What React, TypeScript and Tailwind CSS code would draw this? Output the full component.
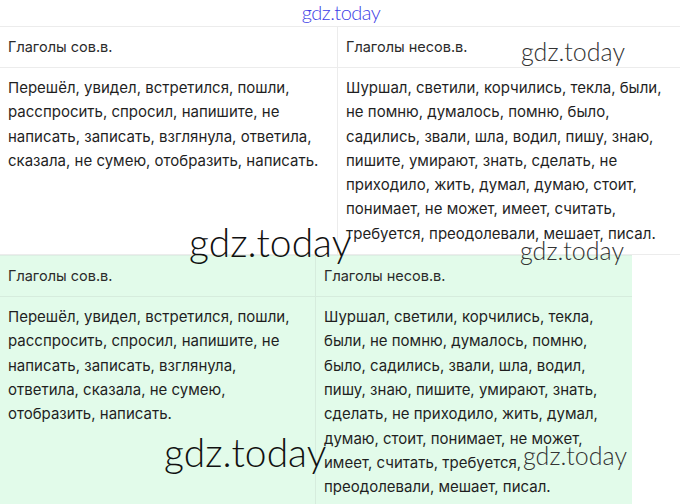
import React from "react";

const sov =
  "Перешёл, увидел, встретился, пошли, расспросить, спросил, напишите, не написать, записать, взглянула, ответила, сказала, не сумею, отобразить, написать.";
const nesov =
  "Шуршал, светили, корчились, текла, были, не помню, думалось, помню, было, садились, звали, шла, водил, пишу, знаю, пишите, умирают, знать, сделать, не приходило, жить, думал, думаю, стоит, понимает, не может, имеет, считать, требуется, преодолевали, мешает, писал.";

function VerbTable({ green }: { green?: boolean }) {
  const wrap = green
    ? "grid w-[632px] grid-cols-[316px_316px] bg-[#e2fbea] border-t border-[#dcefe3]"
    : "grid w-[680px] grid-cols-[338px_342px] bg-white border-t border-[#ececec]";
  const line = green ? "border-[#d6ecdd]" : "border-[#ececec]";
  const head = `px-2 py-2 leading-6 text-[14.5px] text-[#2b2b2b] border-b ${line}`;
  const body = `px-2 py-2 leading-[24.3px] text-[15px] text-[#1f1f1f] border-b ${line}`;

  return (
    <div className={wrap}>
      <div className={`${head} border-r`}>Глаголы сов.в.</div>
      <div className={head}>Глаголы несов.в.</div>
      <div className={`${body} border-r`}>{sov}</div>
      <div className={body}>{nesov}</div>
    </div>
  );
}

export default function App() {
  return (
    <div className="relative w-[680px] h-[504px] overflow-hidden bg-white font-['Inter','Noto_Sans',sans-serif]">
      <div className="h-[26px] flex justify-center">
        <span className="pl-[2px] text-[20px] leading-[24px] text-[#3d3de6] font-['Lato',sans-serif] font-light tracking-tight">
          gdz.today
        </span>
      </div>
      <VerbTable />
      <VerbTable green />

      {/* watermarks over the tables */}
      <span className="absolute left-[521px] top-[39px] text-[25px] leading-none text-[#333] font-light font-['Lato',sans-serif]">
        gdz.today
      </span>
      <span className="absolute left-[189px] top-[223px] text-[39px] leading-none text-[#111] font-light font-['Lato',sans-serif]">
        gdz.today
      </span>
      <span className="absolute left-[520px] top-[238px] text-[25px] leading-none text-[#333] font-light font-['Lato',sans-serif]">
        gdz.today
      </span>
      <span className="absolute left-[164px] top-[433px] text-[39px] leading-none text-[#111] font-light font-['Lato',sans-serif]">
        gdz.today
      </span>
      <span className="absolute left-[523px] top-[443px] text-[25px] leading-none text-[#333] font-light font-['Lato',sans-serif]">
        gdz.today
      </span>
    </div>
  );
}
